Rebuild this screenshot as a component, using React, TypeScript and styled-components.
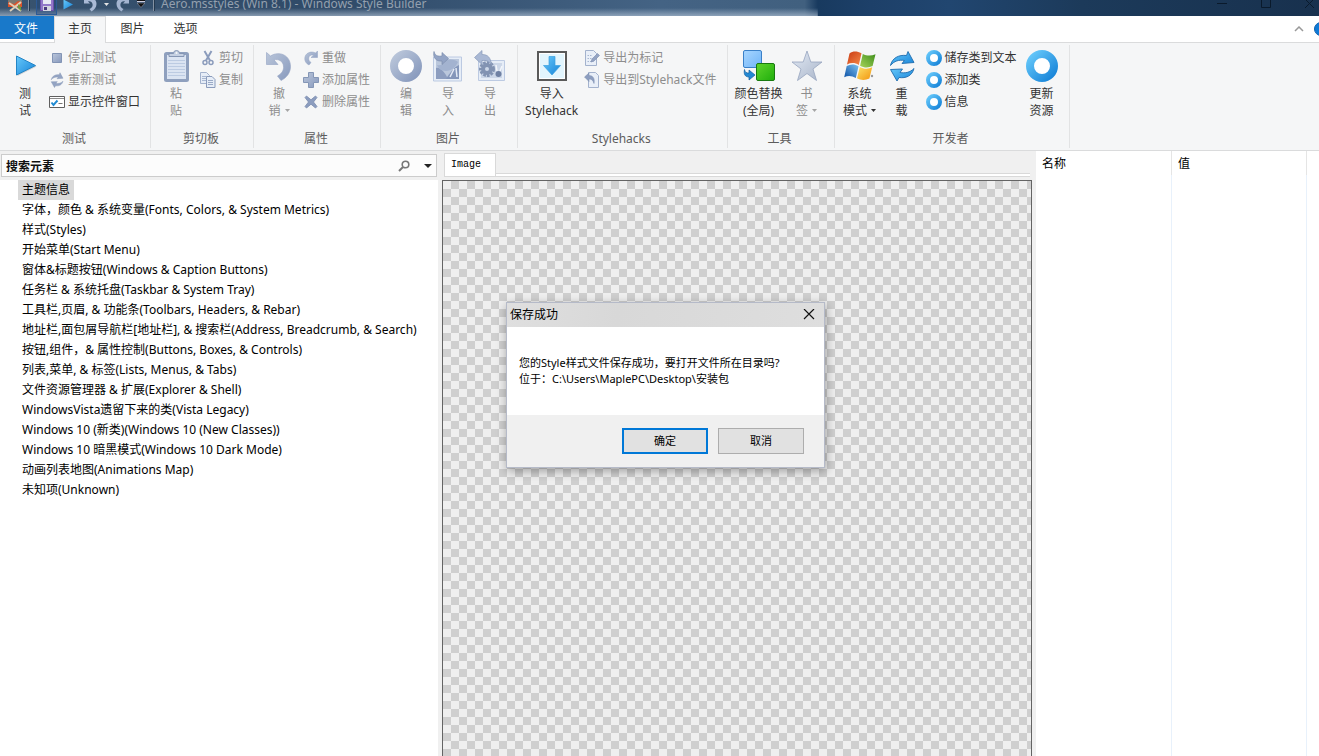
import React from "react";
import styled, { createGlobalStyle, css } from "styled-components";

const GlobalStyle = createGlobalStyle`
  *, *::before, *::after { box-sizing: border-box; }
  html, body, #root { height: 100%; }
  body {
    margin: 0;
    overflow: hidden;
    background: #f0f0f0;
    color: #000;
    font: 12px/16px "Noto Sans", "Noto Sans CJK SC", sans-serif;
  }
  button, input { font: inherit; color: inherit; margin: 0; padding: 0; border: 0; background: none; }
  svg { display: block; flex: none; }
`;

const Window = styled.div`
  display: flex;
  flex-direction: column;
  height: 100vh;
`;

/* ---------- title bar ---------- */

const TitleBar = styled.header`
  display: flex;
  align-items: flex-end;
  flex: none;
  height: 16px;
  overflow: hidden;
  background:
    linear-gradient(to bottom, transparent 8px, rgba(190, 205, 222, 0.6) 16px) 0 0 / 62% 100% no-repeat,
    linear-gradient(to right, #38536f 0, #2f4a68 25%, #446384 50%, #41607f 61%, #183a5f 62%, #1d4069 66%, #214670 72%, #1c3a5a 82%, #18314e 100%);
`;

const TitleRow = styled.div`
  display: flex;
  align-items: center;
  flex: 1;
  height: 24px;
  padding-left: 7px;
`;

const QuickButton = styled.button<{ $width: number; $active?: boolean }>`
  display: flex;
  align-items: center;
  justify-content: center;
  width: ${(p) => p.$width}px;
  height: 22px;
  ${(p) => p.$active && css`outline: 1px solid #2d5a94; outline-offset: -1px; background: rgba(30, 70, 130, 0.35);`}
`;

const QuickDivider = styled.span`
  width: 2px;
  height: 14px;
  margin: 0 6px;
  border-left: 1px solid #8492a3;
  border-right: 1px solid #24394f;
`;

const Title = styled.h1`
  flex: 1;
  margin: 0;
  font-size: 12px;
  font-weight: 400;
  color: #94a0ae;
  white-space: nowrap;
`;

const CaptionButton = styled.button`
  display: flex;
  align-items: center;
  justify-content: center;
  width: 44px;
  height: 22px;
  &:last-child { width: 31px; padding-left: 13px; }
`;

/* ---------- ribbon ---------- */

const TabStrip = styled.nav`
  display: flex;
  flex: none;
  height: 27px;
  background: #fff;
  border-bottom: 1px solid #dadbdc;
`;

const FileTab = styled.button`
  width: 54px;
  height: 23px;
  padding: 2px 2px 0 0;
  background: #1979ca;
  color: #fff;
`;

const Tab = styled.button<{ $active?: boolean }>`
  width: 53px;
  height: 27px;
  padding-bottom: 2px;
  color: #333;
  ${(p) => p.$active && css`
    width: 52px;
    border: 1px solid #dadbdc;
    border-bottom: 0;
    background: #f5f6f7;
  `}
`;

const StripTools = styled.div`
  display: flex;
  align-items: center;
  gap: 10px;
  margin-left: auto;
`;

const IconButton = styled.button`
  display: flex;
  align-items: center;
  justify-content: center;
`;

const Ribbon = styled.div`
  display: flex;
  flex: none;
  height: 108px;
  padding: 2px 0;
  background: #f5f6f7;
  border-bottom: 1px solid #dadbdc;
`;

const Group = styled.section`
  display: flex;
  flex-direction: column;
  padding: 1px 6px 0 4px;
  border-right: 1px solid #e2e3e4;
`;

const GroupBody = styled.div`
  display: flex;
  flex: 1;
`;

const GroupLabel = styled.h2`
  margin: 0;
  font-size: 12px;
  line-height: 18px;
  font-weight: 400;
  text-align: center;
  color: #5c5c5c;
`;

const LargeButton = styled.button`
  display: flex;
  flex-direction: column;
  align-items: center;
  gap: 3px;
  min-width: 42px;
  padding: 4px 3px 0;
  line-height: 17px;
  color: #333;
  white-space: nowrap;
  &:disabled { color: #8d8d8d; }
`;

const Line = styled.span`
  display: flex;
  align-items: center;
  justify-content: center;
  gap: 4px;
`;

const SmallColumn = styled.div`
  display: flex;
  flex-direction: column;
  align-items: flex-start;
  padding-top: 1px;
`;

const SmallButton = styled.button`
  display: flex;
  align-items: center;
  gap: 3px;
  height: 22px;
  padding: 0 4px 0 3px;
  color: #333;
  white-space: nowrap;
  &:disabled { color: #8d8d8d; }
`;

/* ---------- workspace ---------- */

const Workspace = styled.main`
  display: grid;
  grid-template-columns: 438px 1fr 283px;
  flex: 1;
  min-height: 0;
`;

const Sidebar = styled.aside`
  display: flex;
  flex-direction: column;
  min-height: 0;
`;

const SearchBox = styled.div`
  display: flex;
  align-items: center;
  flex: none;
  height: 23px;
  margin: 3px 1px;
  padding: 0 4px;
  gap: 14px;
  border: 1px solid #ccc;
  background: #fcfcfc;
`;

const SearchInput = styled.input`
  flex: 1;
  min-width: 0;
  padding-top: 2px;
  font-weight: 700;
  outline: 0;
  &::placeholder { color: #111; opacity: 1; }
`;

const Tree = styled.ul`
  flex: 1;
  margin: 0;
  padding: 0 0 0 18px;
  list-style: none;
  background: #fff;
`;

const TreeItem = styled.li`
  display: flex;
  height: 20px;
`;

const TreeButton = styled.button<{ $selected?: boolean }>`
  padding: 0 4px;
  white-space: nowrap;
  background: ${(p) => (p.$selected ? "#d9d9d9" : "transparent")};
`;

const Preview = styled.section`
  display: flex;
  flex-direction: column;
  min-width: 0;
  padding: 2px 4px 0;
`;

const PreviewTabs = styled.div`
  display: flex;
  flex: none;
  height: 24px;
  margin: 0 2px 3px;
  background: linear-gradient(#d9d9d9, #d9d9d9) 0 20px / 100% 1px no-repeat,
    linear-gradient(#fff, #fff) 0 21px / 100% 2px no-repeat,
    linear-gradient(#d9d9d9, #d9d9d9) 0 23px / 100% 1px no-repeat;
`;

const PreviewTab = styled.button`
  width: 52px;
  height: 23px;
  padding: 0 6px;
  border: 1px solid #d9d9d9;
  border-bottom: 0;
  background: #fff;
  font: 10px/16px "Liberation Mono", monospace;
  text-align: left;
`;

const Canvas = styled.div`
  flex: 1;
  border: 1px solid #646464;
  border-bottom: 0;
  background: repeating-conic-gradient(#cfcfcf 0 25%, #efefef 0 50%) 0 0 / 16px 16px;
`;

const Properties = styled.table`
  width: 100%;
  height: 100%;
  table-layout: fixed;
  border-collapse: separate;
  border-spacing: 0;
  background: #fff;
`;

const HeadCell = styled.th`
  height: 24px;
  padding: 2px 6px 0;
  border-right: 1px solid #e5e5e5;
  font-weight: 400;
  text-align: left;
  &:last-child { border: 0; }
`;

const BodyCell = styled.td`
  border-right: 1px solid #e8f1fb;
  &:last-child { border: 0; }
`;

/* ---------- dialog ---------- */

const Dialog = styled.div`
  position: absolute;
  left: 506px;
  top: 302px;
  width: 319px;
  border: 1px solid #b5bac8;
  background: #fff;
  box-shadow: 1px 3px 10px rgba(0, 0, 0, 0.35);
  font-size: 11px;
`;

const DialogTitle = styled.div`
  display: flex;
  align-items: center;
  justify-content: space-between;
  height: 24px;
  padding: 0 9px 0 3px;
  background: linear-gradient(100deg, #dfdfdf, #d8d8d8 35%, #dedede);
  font-size: 12px;
`;

const DialogText = styled.p`
  height: 88px;
  margin: 0;
  padding: 28px 12px;
  white-space: nowrap;
`;

const DialogFooter = styled.div`
  display: flex;
  justify-content: flex-end;
  gap: 10px;
  padding: 13px 20px;
  background: #f0f0f0;
`;

const DialogButton = styled.button<{ $primary?: boolean }>`
  width: 86px;
  height: 26px;
  border: ${(p) => (p.$primary ? "2px solid #0078d7" : "1px solid #adadad")};
  background: #e1e1e1;
`;

/* ---------- icons ---------- */

const HiddenDefs = styled.svg`
  position: absolute;
`;

const Gradients = () => (
  <HiddenDefs width="0" height="0" aria-hidden="true">
    <defs>
      <linearGradient id="blue" x1="0" y1="0" x2="1" y2="1">
        <stop offset="0" stopColor="#66c8fa" /><stop offset="1" stopColor="#1683d8" />
      </linearGradient>
      <linearGradient id="grey" x1="0" y1="0" x2="1" y2="1">
        <stop offset="0" stopColor="#bac6da" /><stop offset="1" stopColor="#8799bd" />
      </linearGradient>
      <linearGradient id="pale" x1="0" y1="0" x2="1" y2="1">
        <stop offset="0" stopColor="#e3eaf5" /><stop offset="1" stopColor="#a9b5c9" />
      </linearGradient>
      <linearGradient id="sky" x1="0" y1="0" x2="1" y2="1">
        <stop offset="0" stopColor="#a8d6ff" /><stop offset="1" stopColor="#6fb4f8" />
      </linearGradient>
      <linearGradient id="green" x1="0" y1="0" x2="1" y2="1">
        <stop offset="0" stopColor="#5fd42c" /><stop offset="1" stopColor="#1fae0c" />
      </linearGradient>
      <linearGradient id="flagRed" x1="0" y1="0" x2="1" y2="1">
        <stop offset="0" stopColor="#c93a12" /><stop offset="1" stopColor="#f58a4a" />
      </linearGradient>
      <linearGradient id="flagGreen" x1="1" y1="0" x2="0" y2="1">
        <stop offset="0" stopColor="#3f8f1c" /><stop offset="1" stopColor="#a6d35a" />
      </linearGradient>
      <linearGradient id="flagBlue" x1="0" y1="1" x2="1" y2="0">
        <stop offset="0" stopColor="#0b4fa5" /><stop offset="1" stopColor="#7cc2f0" />
      </linearGradient>
      <linearGradient id="flagYellow" x1="1" y1="1" x2="0" y2="0">
        <stop offset="0" stopColor="#f2930c" /><stop offset="1" stopColor="#fde36a" />
      </linearGradient>
    </defs>
  </HiddenDefs>
);

const Big = ({ children }: { children: React.ReactNode }) => (
  <svg width="32" height="32" viewBox="0 0 32 32" aria-hidden="true">{children}</svg>
);
const Small = ({ children }: { children: React.ReactNode }) => (
  <svg width="16" height="16" viewBox="0 0 16 16" aria-hidden="true">{children}</svg>
);

const PlayIcon = () => (
  <Big>
    <path d="M8.500 7v19l19-9.500z" fill="#c9ccd0" />
    <path d="M7.500 6v19l19-9.500z" fill="url(#blue)" stroke="#2385c6" />
  </Big>
);
const PasteIcon = () => (
  <Big>
    <rect x="5.500" y="3.500" width="22" height="27" rx="1" fill="#dbe4f2" stroke="#8fa0be" strokeWidth="3" />
    <path d="M8 10.500h17M8 13.500h17M8 16.500h17M8 19.500h17M8 22.500h17M8 25.500h17" stroke="#bccbe2" />
    <path d="M9 6.500V3.500h4.500a3 3 0 0 1 6 0H24v3z" fill="#c5d0e2" stroke="#8596b4" />
    <circle cx="16.500" cy="3" r="1" fill="#f5f6f7" />
  </Big>
);
const UndoIcon = () => (
  <Big>
    <path d="M3.500 2.500l4 3.500C16 .5 27.500 5 27.500 16.500c0 6-3.500 11-9.500 14L14.500 26c4.500-2.500 6.500-6 6-10-.500-5-5.500-7.500-9.500-6l4 4.500H3.500z" fill="url(#grey)" stroke="#93a3c2" strokeWidth=".6" />
  </Big>
);
const RingIcon = ({ paint }: { paint: string }) => (
  <Big><circle cx="16" cy="16" r="12" fill="#fff" stroke={`url(#${paint})`} strokeWidth="8" /></Big>
);
const SmallRing = () => (
  <Small><circle cx="8" cy="8" r="6" fill="#fff" stroke="url(#blue)" strokeWidth="4" /></Small>
);
const ImportPicture = () => (
  <Big>
    <path d="M1.500 7h28v24h-28z" fill="#e6edf7" stroke="#bccae2" />
    <path d="M4 9h23v20H4z" fill="#bac7dc" />
    <path d="M4 18c4-1 8 3 12 11H4z" fill="#8c9dbf" />
    <path d="M14 29c3-5 8-12 13-14v14z" fill="#8496ba" />
    <path d="M14 10c6-1 10 0 12 2-2 5-7 9-12 9-5 0-8-3-9-6 4 1 7-1 9-5z" fill="#a3b3d0" />
    <path d="M18 27l4-8M24 18l1 9" stroke="#e3eaf5" strokeWidth="1.500" />
    <path d="M2 1.500c1 4.500 4 5 8 4.500V2.500l6.500 6-6.500 6V11C4.500 11.500.5 8 2 1.500z" fill="#93a4c5" stroke="#7d8eae" strokeWidth=".7" />
  </Big>
);
const ExportPicture = () => (
  <Big>
    <path d="M4.500 10.500h26v20h-26z" fill="#e6edf7" stroke="#bccae2" />
    <path d="M7 13h21v15H7z" fill="#ccd7e8" />
    <circle cx="13" cy="19" r="6.500" fill="none" stroke="#8293b2" strokeWidth="3" strokeDasharray="2.700 1" />
    <circle cx="13" cy="19" r="4" fill="none" stroke="#8293b2" strokeWidth="4" />
    <circle cx="24.500" cy="24" r="3" fill="#6f81a3" />
    <path d="M22 15l1 6M28 16l-2 5" stroke="#f3f6fb" strokeWidth="1.500" />
    <path d="M.5 7.500L8 .5v4c6 0 8.500 3 9.500 10-3-3.500-5-4.500-9.500-4v4z" fill="#a9b8d4" stroke="#8a9bba" strokeWidth=".7" />
  </Big>
);
const ImportHack = () => (
  <Big>
    <path d="M2 2h28v28H2z" fill="#e2f5fd" stroke="#5a5a5a" strokeWidth="2" />
    <path d="M3.500 3.500h25v25h-25z" fill="none" stroke="#fff" />
    <path d="M13 6.500h6v9h5.500L16 25l-8.500-9.500H13z" fill="url(#blue)" stroke="#3aa0e0" strokeWidth=".7" />
  </Big>
);
const ColorSwap = () => (
  <Big>
    <rect x=".5" y=".5" width="18" height="17" rx="1.500" fill="url(#sky)" stroke="#3a80c8" />
    <rect x="13.500" y="13.500" width="18" height="17" rx="1.500" fill="url(#green)" stroke="#187a10" />
    <path d="M1.500 19.500c.5 3 2 3.500 4.500 3.500v-3l6 5-6 5v-3c-4 0-5.500-3-4.500-7.500z" fill="#2389d3" stroke="#145f9e" strokeWidth=".7" />
  </Big>
);
const StarIcon = () => (
  <Big>
    <path d="M16 1l3.800 11H31l-9 7 3.500 11.500L16 23.500 6.500 30.500 10 19 1 12h11.200z" fill="url(#pale)" stroke="#97a5bf" strokeWidth=".8" />
  </Big>
);
const FlagIcon = () => (
  <Big>
    <path d="M5.500 3.500C9 .8 13 1 17.500 3.300L14.800 15C11 12.600 7 12.500 3 14.600z" fill="url(#flagRed)" />
    <path d="M18.800 4c4 2 8.500 2 12.700.3L28.600 16c-4 2-8.500 2-12.500-.3z" fill="url(#flagGreen)" />
    <path d="M2.700 15.900c4-2.100 8-2 11.800.3L11.800 28C8 25.500 4 25.200.2 27.200z" fill="url(#flagBlue)" />
    <path d="M15.800 16.900c4 2.200 8.500 2.300 12.400.4L25.400 28.500c-4 2-8.400 2-12.400-.2z" fill="url(#flagYellow)" />
    <circle cx="28" cy="26" r="1.200" fill="#999" />
  </Big>
);
const RefreshPath = ({ fill, stroke }: { fill: string; stroke: string }) => (
  <g fill={fill} stroke={stroke} strokeWidth=".9" strokeLinejoin="round">
    <path d="M4.500 15.500C6 8 13 4.500 20.500 5.500L22 1.500l6 11-12 1 2.500-3C13 9.500 8 11 4.500 15.500z" />
    <path d="M28 18.500C26 26 20 28.500 13 27.500L11 31 4.500 19.500l12-.5-2.500 3.500c5 1 10 0 14-4z" />
  </g>
);
const ReloadIcon = () => <Big><RefreshPath fill="url(#blue)" stroke="#1f6cae" /></Big>;

const StopIcon = () => (
  <Small><path d="M3.500 3.500h9v9h-9z" fill="url(#grey)" stroke="#8294b5" /></Small>
);
const RetestIcon = () => (
  <svg width="16" height="16" viewBox="2 0 28 32" aria-hidden="true"><RefreshPath fill="#94a4c3" stroke="#8496b6" /></svg>
);
const WidgetIcon = () => (
  <Small>
    <path d="M.5 2.500h15v11H.5z" fill="#fff" stroke="#5f5f5f" />
    <path d="M1 4.500h14" stroke="#8a8a8a" />
    <path d="M2.500 8.500l2 2.500 4-4.500" fill="none" stroke="#1f8ad2" strokeWidth="2" />
    <path d="M9.500 9.500h4" stroke="#777" />
  </Small>
);
const CutIcon = () => (
  <Small>
    <path d="M4.500 1l5.500 9.500M11.500 1L6 10.500" stroke="#8b9cbc" strokeWidth="2" />
    <circle cx="5" cy="12.500" r="2" fill="none" stroke="#8b9cbc" strokeWidth="1.500" />
    <circle cx="11" cy="12.500" r="2" fill="none" stroke="#8b9cbc" strokeWidth="1.500" />
  </Small>
);
const CopyIcon = () => (
  <Small>
    <path d="M.5.500h6l3 3v8h-9z" fill="#e6edf7" stroke="#a3b2cd" />
    <path d="M2 4.500h4M2 6.500h4M2 8.500h4" stroke="#a9b8d2" />
    <path d="M6.500 4.500h5.500l3 3v8H6.500z" fill="#e6edf7" stroke="#8b9cbc" />
    <path d="M8 8.500h5M8 10.500h5M8 12.500h5" stroke="#9aaac6" />
  </Small>
);
const RedoIcon = () => (
  <Small>
    <path d="M14.500 1v6.500H8l2.500-2.300C7.500 4.300 6 6 5.700 8c-.2 2 .8 3.500 2.300 4.500L6 15C3 13.500 1.500 11 1.800 8 2.300 3 8 .500 12.500 3z" fill="url(#grey)" stroke="#93a3c2" strokeWidth=".5" />
  </Small>
);
const AddIcon = () => (
  <Small><path d="M5.500.500h5v5h5v5h-5v5h-5v-5h-5v-5h5z" fill="url(#grey)" stroke="#8496b6" /></Small>
);
const RemoveIcon = () => (
  <Small><path d="M3.500 2L8 5.800 12.500 2 14 3.500 10.500 8l3.500 4.500-1.500 1.500L8 10.200 3.500 14 2 12.500 5.500 8 2 3.500z" fill="#8c9dbf" stroke="#7a8cae" strokeWidth=".8" /></Small>
);
const MarkIcon = () => (
  <Small>
    <path d="M1.500.500h8l3 3v12h-11z" fill="#e9eff8" stroke="#a3b2cd" />
    <path d="M3.500 5.500h5M3.500 8.500h4M3.500 11.500h6" stroke="#a9b8d2" strokeDasharray="1.500 1" />
    <path d="M7 12l1-3 5.500-5.500 2 2L10 11z" fill="#94a4c3" stroke="#7a8cae" strokeWidth=".6" />
  </Small>
);
const HackFileIcon = () => (
  <Small>
    <path d="M4.500.500h7l3 3v12h-10z" fill="#e9eff8" stroke="#a3b2cd" />
    <path d="M.5 5L5 1v2.500c4 0 6 3 5 8C9 8.500 8 7 5 7v2.500z" fill="#8c9dbf" stroke="#7a8cae" strokeWidth=".5" />
  </Small>
);
const Caret = ({ color }: { color: string }) => (
  <svg width="5" height="3" viewBox="0 0 5 3" aria-hidden="true"><path d="M0 0h5L2.500 3z" fill={color} /></svg>
);

/* ---------- data ---------- */

const treeItems = [
  "主题信息",
  "字体，颜色 & 系统变量(Fonts, Colors, & System Metrics)",
  "样式(Styles)",
  "开始菜单(Start Menu)",
  "窗体&标题按钮(Windows & Caption Buttons)",
  "任务栏 & 系统托盘(Taskbar & System Tray)",
  "工具栏,页眉, & 功能条(Toolbars, Headers, & Rebar)",
  "地址栏,面包屑导航栏[地址栏], & 搜索栏(Address, Breadcrumb, & Search)",
  "按钮,组件，& 属性控制(Buttons, Boxes, & Controls)",
  "列表,菜单, & 标签(Lists, Menus, & Tabs)",
  "文件资源管理器 & 扩展(Explorer & Shell)",
  "WindowsVista遗留下来的类(Vista Legacy)",
  "Windows 10 (新类)(Windows 10 (New Classes))",
  "Windows 10 暗黑模式(Windows 10 Dark Mode)",
  "动画列表地图(Animations Map)",
  "未知项(Unknown)",
];

type LargeProps = { icon: React.ReactNode; lines: string[]; disabled?: boolean; menu?: boolean };
const Large = ({ icon, lines, disabled, menu }: LargeProps) => (
  <LargeButton disabled={disabled}>
    {icon}
    <span>
      <Line>{lines[0]}</Line>
      <Line>{lines[1]}{menu && <Caret color={disabled ? "#a5a5a5" : "#333"} />}</Line>
    </span>
  </LargeButton>
);

type ItemProps = { icon: React.ReactNode; label: string; disabled?: boolean };
const Item = ({ icon, label, disabled }: ItemProps) => (
  <SmallButton disabled={disabled}>{icon}<span>{label}</span></SmallButton>
);

const RibbonGroup = ({ label, children }: { label: string; children: React.ReactNode }) => (
  <Group>
    <GroupBody>{children}</GroupBody>
    <GroupLabel>{label}</GroupLabel>
  </Group>
);

export default function App() {
  return (
    <Window>
      <GlobalStyle />
      <Gradients />
      <TitleBar>
        <TitleRow>
          <QuickButton $width={15} aria-label="Window menu">
            <Small>
              <path d="M1 2h14v9H1z" fill="#7b7770" />
              <path d="M1 6l6 2 4-3 4 1v5H1z" fill="#d9532c" />
              <path d="M2 7l12 8M14 6L3 15" stroke="#ddd0b8" strokeWidth="2" />
              <path d="M11 8l3 3v4l-3-3z" fill="#6f9a3c" />
            </Small>
          </QuickButton>
          <QuickDivider />
          <QuickButton $width={21} $active aria-label="保存">
            <Small>
              <path d="M1.500 1.500h13v13h-13z" fill="#9277c9" stroke="#6c50a8" />
              <path d="M4 1h8v7H4z" fill="#e8e8f4" />
              <path d="M4 10h8v5H4z" fill="#d5d5e0" /><path d="M5 11h3v3H5z" fill="#4b3a80" />
            </Small>
          </QuickButton>
          <QuickButton $width={22} aria-label="测试">
            <Small><path d="M3.500 3.500v10l9.500-5z" fill="url(#blue)" /></Small>
          </QuickButton>
          <QuickButton $width={22} aria-label="撤销">
            <svg width="16" height="16" viewBox="0 0 32 32" aria-hidden="true">
              <path d="M4 2l4 4C17 0 29 5 29 16c0 6-4 12-10 15l-4-5c5-2 7-6 6-10-.5-4-5-7-9-5l4 4H4z" fill="#a9bad6" />
            </svg>
          </QuickButton>
          <QuickButton $width={10} aria-label="撤销列表"><Caret color="#e4e4e4" /></QuickButton>
          <QuickButton $width={24} aria-label="重做">
            <svg width="16" height="16" viewBox="0 0 32 32" aria-hidden="true">
              <path d="M28 2l-4 4C15 0 3 5 3 16c0 6 4 12 10 15l4-5c-5-2-7-6-6-10 .5-4 5-7 9-5l-4 4h12z" fill="#a3b4d0" />
            </svg>
          </QuickButton>
          <QuickButton $width={12} aria-label="自定义快速访问工具栏">
            <svg width="8" height="8" viewBox="0 0 8 8" aria-hidden="true">
              <path d="M0 .5h8" stroke="#111" /><path d="M0 1.500h8" stroke="#ccd" /><path d="M0 3h8L4 7.500z" fill="#111" stroke="#aab" strokeWidth=".5" />
            </svg>
          </QuickButton>
          <QuickDivider />
          <Title>Aero.msstyles (Win 8.1) - Windows Style Builder</Title>
          <CaptionButton aria-label="最小化">
            <svg width="10" height="10" viewBox="0 0 10 10"><path d="M0 4.500h10" stroke="#0a1a2c" /></svg>
          </CaptionButton>
          <CaptionButton aria-label="最大化">
            <svg width="10" height="10" viewBox="0 0 10 10"><path d="M.5.500h9v8h-9z" fill="none" stroke="#0a1a2c" /></svg>
          </CaptionButton>
          <CaptionButton aria-label="关闭">
            <svg width="10" height="10" viewBox="0 0 10 10"><path d="M0 0l9 9M9 0L0 9" stroke="#0a1a2c" /></svg>
          </CaptionButton>
        </TitleRow>
      </TitleBar>

      <TabStrip>
        <FileTab>文件</FileTab>
        <Tab $active>主页</Tab>
        <Tab>图片</Tab>
        <Tab>选项</Tab>
        <StripTools>
          <IconButton aria-label="折叠功能区">
            <svg width="10" height="6" viewBox="0 0 10 6"><path d="M1 5l4-4 4 4" fill="none" stroke="#999" strokeWidth="1.500" /></svg>
          </IconButton>
          <IconButton aria-label="帮助">
            <svg width="5" height="16" viewBox="0 0 5 16"><circle cx="7" cy="8" r="6.500" fill="#0f7ad6" stroke="#0b5fae" /></svg>
          </IconButton>
        </StripTools>
      </TabStrip>

      <Ribbon>
        <RibbonGroup label="测试">
          <Large icon={<PlayIcon />} lines={["测", "试"]} />
          <SmallColumn>
            <Item icon={<StopIcon />} label="停止测试" disabled />
            <Item icon={<RetestIcon />} label="重新测试" disabled />
            <Item icon={<WidgetIcon />} label="显示控件窗口" />
          </SmallColumn>
        </RibbonGroup>
        <RibbonGroup label="剪切板">
          <Large icon={<PasteIcon />} lines={["粘", "贴"]} disabled />
          <SmallColumn>
            <Item icon={<CutIcon />} label="剪切" disabled />
            <Item icon={<CopyIcon />} label="复制" disabled />
          </SmallColumn>
        </RibbonGroup>
        <RibbonGroup label="属性">
          <Large icon={<UndoIcon />} lines={["撤", "销"]} disabled menu />
          <SmallColumn>
            <Item icon={<RedoIcon />} label="重做" disabled />
            <Item icon={<AddIcon />} label="添加属性" disabled />
            <Item icon={<RemoveIcon />} label="删除属性" disabled />
          </SmallColumn>
        </RibbonGroup>
        <RibbonGroup label="图片">
          <Large icon={<RingIcon paint="grey" />} lines={["编", "辑"]} disabled />
          <Large icon={<ImportPicture />} lines={["导", "入"]} disabled />
          <Large icon={<ExportPicture />} lines={["导", "出"]} disabled />
        </RibbonGroup>
        <RibbonGroup label="Stylehacks">
          <Large icon={<ImportHack />} lines={["导入", "Stylehack"]} />
          <SmallColumn>
            <Item icon={<MarkIcon />} label="导出为标记" disabled />
            <Item icon={<HackFileIcon />} label="导出到Stylehack文件" disabled />
          </SmallColumn>
        </RibbonGroup>
        <RibbonGroup label="工具">
          <Large icon={<ColorSwap />} lines={["颜色替换", "(全局)"]} />
          <Large icon={<StarIcon />} lines={["书", "签"]} disabled menu />
        </RibbonGroup>
        <RibbonGroup label="开发者">
          <Large icon={<FlagIcon />} lines={["系统", "模式"]} menu />
          <Large icon={<ReloadIcon />} lines={["重", "载"]} />
          <SmallColumn>
            <Item icon={<SmallRing />} label="储存类到文本" />
            <Item icon={<SmallRing />} label="添加类" />
            <Item icon={<SmallRing />} label="信息" />
          </SmallColumn>
          <Large icon={<RingIcon paint="blue" />} lines={["更新", "资源"]} />
        </RibbonGroup>
      </Ribbon>

      <Workspace>
        <Sidebar>
          <SearchBox>
            <SearchInput aria-label="搜索元素" placeholder="搜索元素" />
            <IconButton aria-label="搜索">
              <svg width="12" height="12" viewBox="0 0 12 12"><circle cx="7.500" cy="4.500" r="3.300" fill="none" stroke="#777" strokeWidth="1.600" /><path d="M5 7L1 11" stroke="#777" strokeWidth="2" /></svg>
            </IconButton>
            <IconButton aria-label="搜索选项">
              <svg width="8" height="4" viewBox="0 0 8 4"><path d="M0 0h8L4 4z" fill="#222" /></svg>
            </IconButton>
          </SearchBox>
          <Tree>
            {treeItems.map((item, i) => (
              <TreeItem key={item}><TreeButton $selected={i === 0}>{item}</TreeButton></TreeItem>
            ))}
          </Tree>
        </Sidebar>

        <Preview>
          <PreviewTabs><PreviewTab>Image</PreviewTab></PreviewTabs>
          <Canvas />
        </Preview>

        <Properties>
          <colgroup><col width="136" /><col width="135" /><col /></colgroup>
          <thead><tr><HeadCell>名称</HeadCell><HeadCell>值</HeadCell><HeadCell aria-hidden="true" /></tr></thead>
          <tbody><tr><BodyCell /><BodyCell /><BodyCell /></tr></tbody>
        </Properties>
      </Workspace>

      <Dialog role="dialog" aria-labelledby="dialog-title">
        <DialogTitle>
          <span id="dialog-title">保存成功</span>
          <IconButton aria-label="关闭">
            <svg width="12" height="12" viewBox="0 0 12 12"><path d="M1 0l10 10M11 0L1 10" stroke="#111" strokeWidth="1.200" /></svg>
          </IconButton>
        </DialogTitle>
        <DialogText>
          您的Style样式文件保存成功，要打开文件所在目录吗?<br />
          位于：C:\Users\MaplePC\Desktop\安装包
        </DialogText>
        <DialogFooter>
          <DialogButton $primary>确定</DialogButton>
          <DialogButton>取消</DialogButton>
        </DialogFooter>
      </Dialog>
    </Window>
  );
}
